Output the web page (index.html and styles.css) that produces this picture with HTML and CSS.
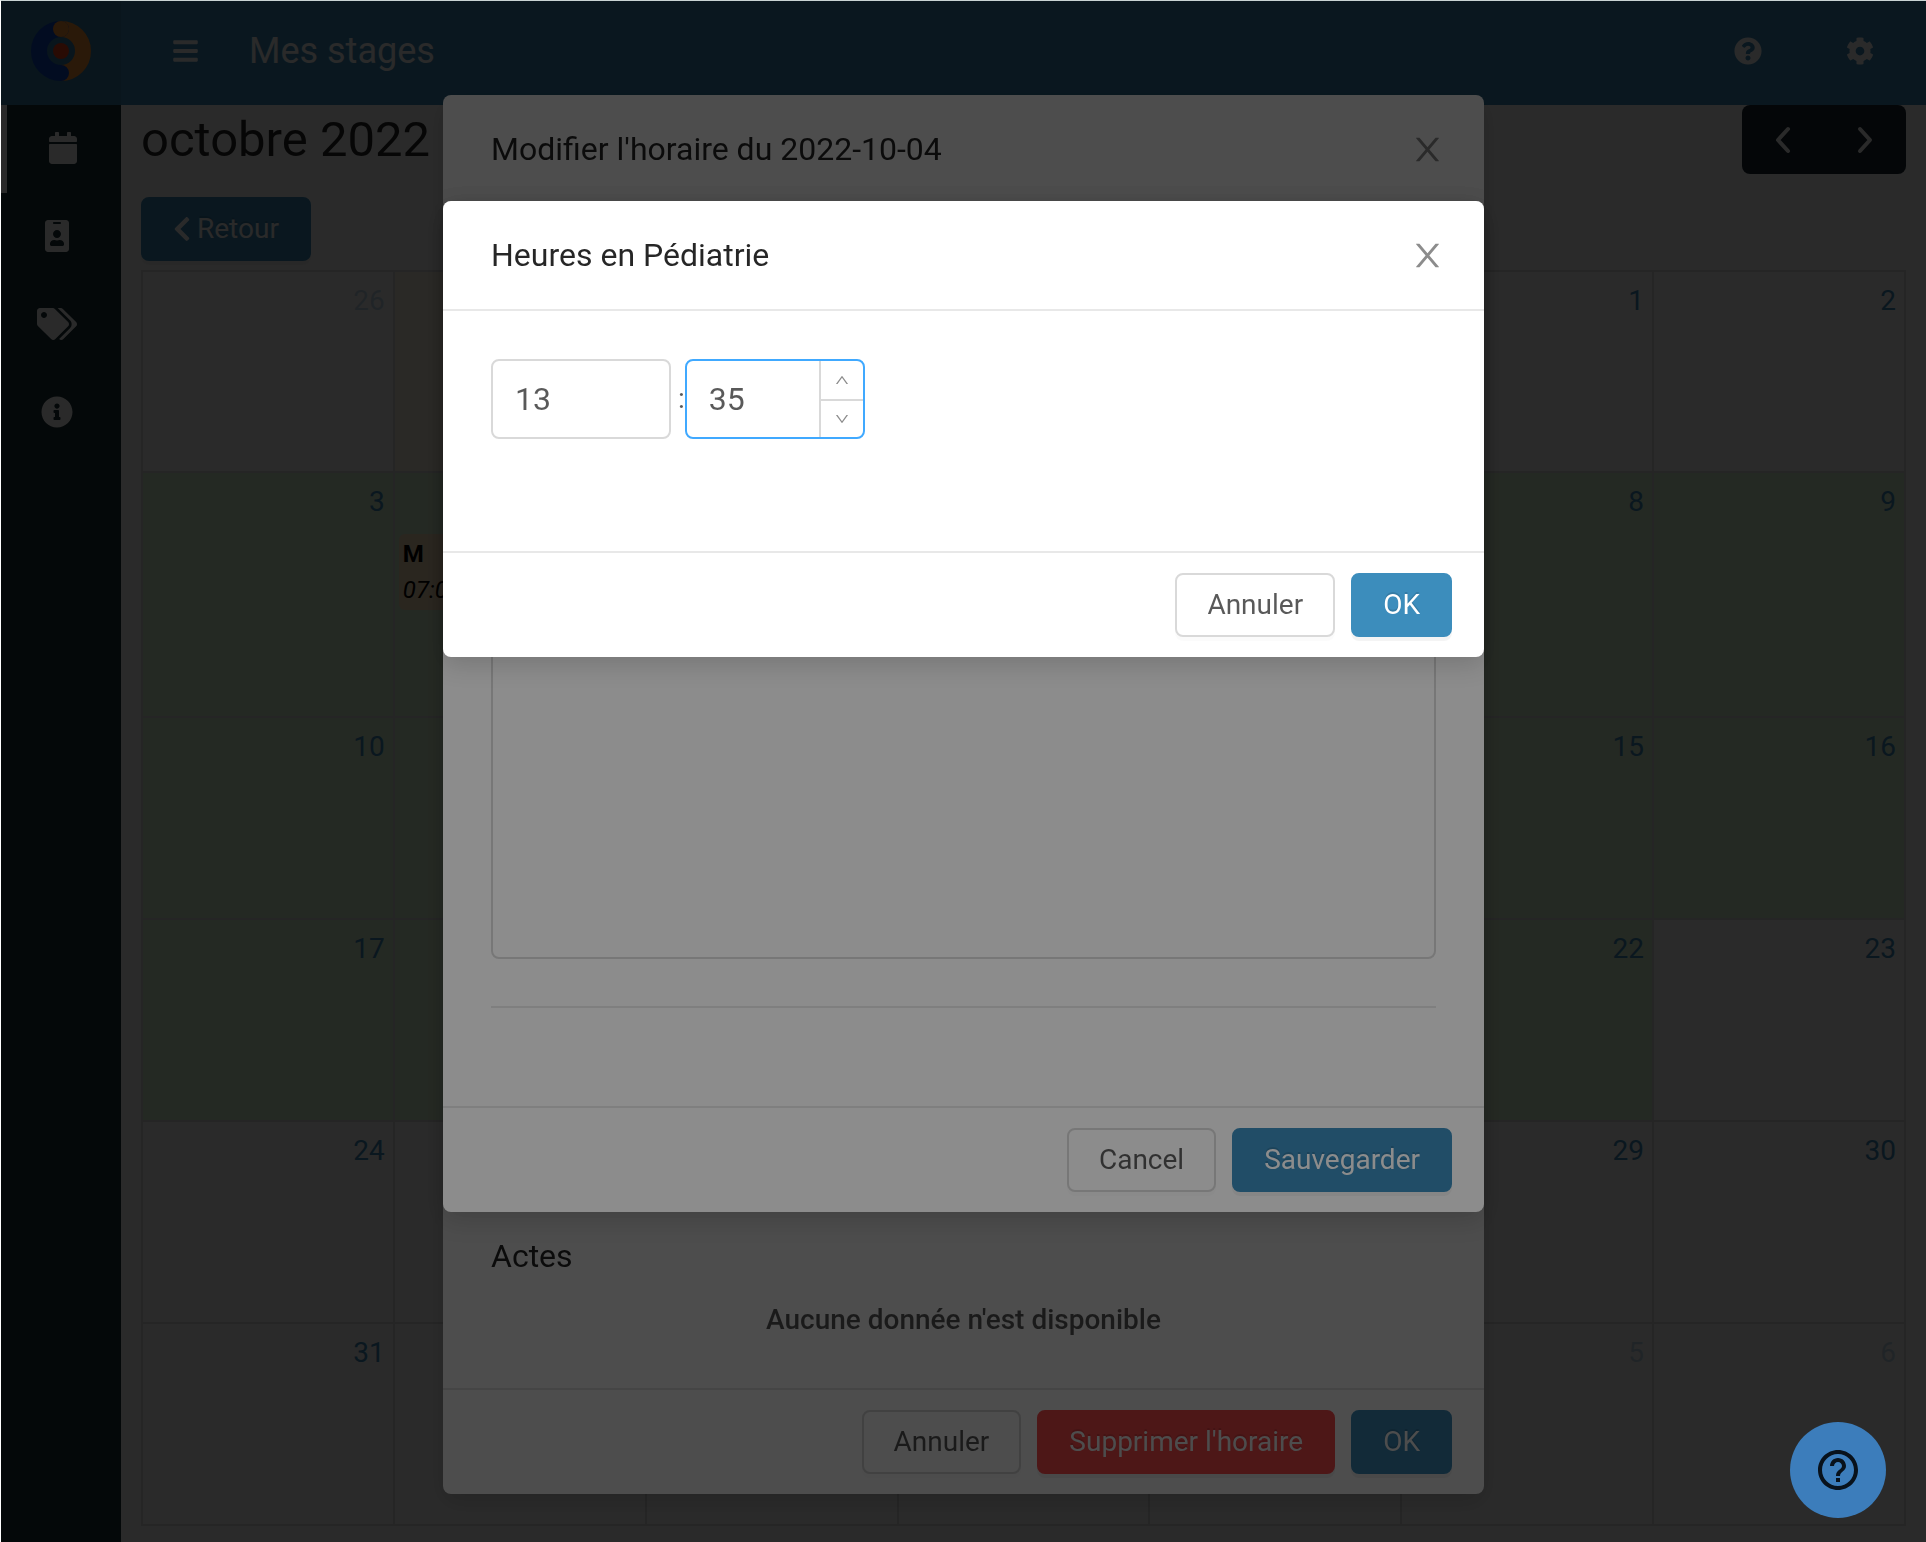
FILE: index.html
```html
<!DOCTYPE html>
<html lang="fr">
<head>
    <meta charset="utf-8">
    <title>Mes stages</title>
    <link rel="stylesheet" href="styles.css">
</head>
<body>

<div class="app">
    <header class="header">
        <a class="logo" href="#" aria-label="Accueil">
            <svg width="60" height="60" viewBox="0 0 60 60" fill="none" stroke-width="16">
                <path stroke="#ff9636" d="M30 8A22 22 0 0 1 30 52"/>
                <path stroke="#0c48c8" stroke-linecap="round" d="M30 52A22 22 0 0 1 30 8"/>
                <circle cx="30" cy="8" r="8" fill="#ff9636"/>
                <circle cx="30" cy="30" r="8" fill="#f7441c"/>
            </svg>
        </a>
        <button class="icon-btn menu-btn" aria-label="Menu">
            <svg width="25" height="28" viewBox="0 0 448 512"><path d="M16 132h416c8.837 0 16-7.163 16-16V76c0-8.837-7.163-16-16-16H16C7.163 60 0 67.163 0 76v40c0 8.837 7.163 16 16 16zm0 160h416c8.837 0 16-7.163 16-16v-40c0-8.837-7.163-16-16-16H16c-8.837 0-16 7.163-16 16v40c0 8.837 7.163 16 16 16zm0 160h416c8.837 0 16-7.163 16-16v-40c0-8.837-7.163-16-16-16H16c-8.837 0-16 7.163-16 16v40c0 8.837 7.163 16 16 16z"/></svg>
        </button>
        <h1 class="header-title">Mes stages</h1>
        <div class="header-tools">
            <button class="icon-btn" aria-label="Aide">
                <svg width="28" height="28" viewBox="0 0 512 512"><path d="M504 256c0 136.997-111.043 248-248 248S8 392.997 8 256C8 119.083 119.043 8 256 8s248 111.083 248 248zM262.655 90c-54.497 0-89.255 22.957-116.549 63.758-3.536 5.286-2.353 12.415 2.715 16.258l34.699 26.31c5.205 3.947 12.621 3.008 16.665-2.122 17.864-22.658 30.113-35.797 57.303-35.797 20.429 0 45.698 13.148 45.698 32.958 0 14.976-12.363 22.667-32.534 33.976C247.128 238.528 216 254.941 216 296v4c0 6.627 5.373 12 12 12h56c6.627 0 12-5.373 12-12v-1.333c0-28.462 83.186-29.647 83.186-106.667 0-58.002-60.165-102-116.531-102zM256 338c-25.365 0-46 20.635-46 46 0 25.364 20.635 46 46 46s46-20.636 46-46c0-25.365-20.635-46-46-46z"/></svg>
            </button>
            <button class="icon-btn" aria-label="Paramètres">
                <svg width="28" height="28" viewBox="0 0 512 512"><path d="M487.4 315.7l-42.6-24.6c4.3-23.2 4.3-47 0-70.2l42.6-24.6c4.9-2.8 7.1-8.6 5.5-14-11.1-35.6-30-67.8-54.7-94.6-3.8-4.1-10-5.1-14.8-2.3L380.8 110c-17.9-15.4-38.5-27.3-60.8-35.1V25.8c0-5.6-3.9-10.5-9.4-11.7-36.7-8.2-74.3-7.8-109.2 0-5.5 1.2-9.4 6.1-9.4 11.7V75c-22.2 7.9-42.8 19.8-60.8 35.1L88.7 85.5c-4.9-2.8-11-1.9-14.8 2.3-24.7 26.7-43.6 58.9-54.7 94.6-1.7 5.4.6 11.2 5.5 14L67.3 221c-4.3 23.2-4.3 47 0 70.2l-42.6 24.6c-4.9 2.8-7.1 8.6-5.5 14 11.1 35.6 30 67.8 54.7 94.6 3.8 4.1 10 5.1 14.8 2.3l42.6-24.6c17.9 15.4 38.5 27.3 60.8 35.1v49.2c0 5.6 3.9 10.5 9.4 11.7 36.7 8.2 74.3 7.8 109.2 0 5.5-1.2 9.4-6.1 9.4-11.7v-49.2c22.2-7.9 42.8-19.8 60.8-35.1l42.6 24.6c4.9 2.8 11 1.9 14.8-2.3 24.7-26.7 43.6-58.9 54.7-94.6 1.5-5.5-.7-11.3-5.6-14.1zM256 336c-44.1 0-80-35.9-80-80s35.9-80 80-80 80 35.9 80 80-35.9 80-80 80z"/></svg>
            </button>
        </div>
    </header>

    <div class="main">
        <nav class="sidebar">
            <a class="sidebar-item active" href="#" aria-label="Calendrier">
                <svg width="28" height="32" viewBox="0 0 448 512"><path d="M12 192h424c6.6 0 12 5.4 12 12v260c0 26.5-21.5 48-48 48H48c-26.5 0-48-21.5-48-48V204c0-6.6 5.4-12 12-12zm436-44v-36c0-26.5-21.5-48-48-48h-48V12c0-6.6-5.4-12-12-12h-40c-6.6 0-12 5.4-12 12v52H160V12c0-6.6-5.4-12-12-12h-40c-6.6 0-12 5.4-12 12v52H48C21.5 64 0 85.5 0 112v36c0 6.6 5.4 12 12 12h424c6.6 0 12-5.4 12-12z"/></svg>
            </a>
            <a class="sidebar-item" href="#" aria-label="Profil">
                <svg width="24" height="32" viewBox="0 0 384 512"><path d="M336 0H48C21.5 0 0 21.5 0 48v416c0 26.5 21.5 48 48 48h288c26.5 0 48-21.5 48-48V48c0-26.5-21.5-48-48-48zM144 32h96c8.8 0 16 7.2 16 16s-7.2 16-16 16h-96c-8.8 0-16-7.2-16-16s7.2-16 16-16zm48 128c35.3 0 64 28.7 64 64s-28.7 64-64 64-64-28.7-64-64 28.7-64 64-64zm112 236.8c0 10.6-10 19.2-22.4 19.2H102.4C90 416 80 407.4 80 396.8v-19.2c0-31.8 30.1-57.6 67.2-57.6h5c12.3 5.1 25.7 8 39.8 8s27.6-2.9 39.8-8h5c37.1 0 67.2 25.8 67.2 57.6v19.2z"/></svg>
            </a>
            <a class="sidebar-item" href="#" aria-label="Étiquettes">
                <svg width="40" height="32" viewBox="0 0 640 512"><path d="M497.941 225.941L286.059 14.059A48 48 0 0 0 252.118 0H48C21.49 0 0 21.49 0 48v204.118a48 48 0 0 0 14.059 33.941l211.882 211.882c18.744 18.745 49.136 18.746 67.882 0l204.118-204.118c18.745-18.745 18.745-49.137 0-67.882zM112 160c-26.51 0-48-21.49-48-48s21.49-48 48-48 48 21.49 48 48-21.49 48-48 48zm513.941 133.823L421.823 497.941c-18.745 18.745-49.137 18.745-67.882 0l-.36-.36L527.64 323.522c16.999-16.999 26.362-39.6 26.362-63.64s-9.362-46.641-26.362-63.64L331.397 0h48.721a48 48 0 0 1 33.941 14.059l211.882 211.882c18.745 18.745 18.745 49.137 0 67.882z"/></svg>
            </a>
            <a class="sidebar-item" href="#" aria-label="Informations">
                <svg width="32" height="32" viewBox="0 0 512 512"><path d="M256 8C119.043 8 8 119.083 8 256c0 136.997 111.043 248 248 248s248-111.003 248-248C504 119.083 392.957 8 256 8zm0 110c23.196 0 42 18.804 42 42s-18.804 42-42 42-42-18.804-42-42 18.804-42 42-42zm56 254c0 6.627-5.373 12-12 12h-88c-6.627 0-12-5.373-12-12v-24c0-6.627 5.373-12 12-12h12v-64h-12c-6.627 0-12-5.373-12-12v-24c0-6.627 5.373-12 12-12h64c6.627 0 12 5.373 12 12v100h12c6.627 0 12 5.373 12 12v24z"/></svg>
            </a>
        </nav>

        <main class="content">
            <div class="toolbar">
                <h2>octobre 2022</h2>
                <div class="nav-group">
                    <button aria-label="Mois précédent"><svg width="16" height="28" viewBox="0 0 16 28"><path d="M13 3L3 14l10 11"/></svg></button>
                    <button aria-label="Mois suivant"><svg width="16" height="28" viewBox="0 0 16 28"><path d="M3 3l10 11L3 25"/></svg></button>
                </div>
            </div>
            <button class="btn btn-primary btn-back">
                <svg width="18" height="28" viewBox="0 0 320 512"><path d="M34.52 239.03L228.87 44.69c9.37-9.37 24.57-9.37 33.94 0l22.67 22.67c9.36 9.36 9.37 24.52.04 33.9L131.49 256l154.02 154.75c9.34 9.38 9.32 24.54-.04 33.9l-22.67 22.67c-9.37 9.37-24.57 9.37-33.94 0L34.52 272.97c-9.37-9.37-9.37-24.57 0-33.94z"/></svg>
                Retour
            </button>

            <table class="calendar">
                <tr class="first">
                    <td class="other"><a href="#">26</a></td>
                    <td class="other today"><a href="#">27</a></td>
                    <td class="other"><a href="#">28</a></td>
                    <td class="other"><a href="#">29</a></td>
                    <td class="other"><a href="#">30</a></td>
                    <td><a href="#">1</a></td>
                    <td><a href="#">2</a></td>
                </tr>
                <tr class="busy">
                    <td class="stage"><a href="#">3</a></td>
                    <td class="stage">
                        <a href="#">4</a>
                        <div class="event"><b>M</b><i>07:00</i></div>
                    </td>
                    <td class="stage"><a href="#">5</a></td>
                    <td class="stage"><a href="#">6</a></td>
                    <td class="stage"><a href="#">7</a></td>
                    <td class="stage"><a href="#">8</a></td>
                    <td class="stage"><a href="#">9</a></td>
                </tr>
                <tr>
                    <td class="stage"><a href="#">10</a></td>
                    <td class="stage"><a href="#">11</a></td>
                    <td class="stage"><a href="#">12</a></td>
                    <td class="stage"><a href="#">13</a></td>
                    <td class="stage"><a href="#">14</a></td>
                    <td class="stage"><a href="#">15</a></td>
                    <td class="stage"><a href="#">16</a></td>
                </tr>
                <tr>
                    <td class="stage"><a href="#">17</a></td>
                    <td class="stage"><a href="#">18</a></td>
                    <td class="stage"><a href="#">19</a></td>
                    <td class="stage"><a href="#">20</a></td>
                    <td class="stage"><a href="#">21</a></td>
                    <td class="stage"><a href="#">22</a></td>
                    <td><a href="#">23</a></td>
                </tr>
                <tr>
                    <td><a href="#">24</a></td>
                    <td><a href="#">25</a></td>
                    <td><a href="#">26</a></td>
                    <td><a href="#">27</a></td>
                    <td><a href="#">28</a></td>
                    <td><a href="#">29</a></td>
                    <td><a href="#">30</a></td>
                </tr>
                <tr>
                    <td><a href="#">31</a></td>
                    <td class="other"><a href="#">1</a></td>
                    <td class="other"><a href="#">2</a></td>
                    <td class="other"><a href="#">3</a></td>
                    <td class="other"><a href="#">4</a></td>
                    <td class="other"><a href="#">5</a></td>
                    <td class="other"><a href="#">6</a></td>
                </tr>
            </table>
        </main>
    </div>
</div>

<!-- schedule of the day -->
<div class="modal-wrap modal-day">
    <div class="modal" role="dialog" aria-labelledby="day-title">
        <div class="modal-header">
            <h3 id="day-title">Modifier l'horaire du 2022-10-04</h3>
            <button class="modal-close" aria-label="Fermer">
                <svg width="37" height="37" viewBox="0 0 1024 1024"><path d="M563.8 512l262.5-312.9c4.4-5.2.7-13.1-6.1-13.1h-79.8c-4.7 0-9.2 2.1-12.3 5.7L511.6 449.8 295.1 191.7c-3-3.6-7.5-5.7-12.3-5.7H203c-6.8 0-10.5 7.9-6.1 13.1L459.4 512 196.9 824.9A7.95 7.95 0 0 0 203 838h79.8c4.7 0 9.2-2.1 12.3-5.7l216.5-258.1 216.5 258.1c3 3.6 7.5 5.7 12.3 5.7h79.8c6.8 0 10.5-7.9 6.1-13.1L563.8 512z"/></svg>
            </button>
        </div>
        <div class="modal-body">
            <h4>Actes</h4>
            <p class="empty">Aucune donnée n'est disponible</p>
        </div>
        <div class="modal-footer">
            <button class="btn">Annuler</button>
            <button class="btn btn-danger">Supprimer l'horaire</button>
            <button class="btn btn-primary">OK</button>
        </div>
    </div>
</div>

<!-- notes -->
<div class="modal-wrap modal-notes">
    <div class="modal" role="dialog" aria-label="Notes">
        <div class="modal-body">
            <textarea aria-label="Notes"></textarea>
            <hr>
        </div>
        <div class="modal-footer">
            <button class="btn">Cancel</button>
            <button class="btn btn-primary">Sauvegarder</button>
        </div>
    </div>
</div>

<!-- hours -->
<div class="modal-wrap modal-hours">
    <div class="modal" role="dialog" aria-labelledby="hours-title">
        <div class="modal-header">
            <h3 id="hours-title">Heures en Pédiatrie</h3>
            <button class="modal-close" aria-label="Fermer">
                <svg width="37" height="37" viewBox="0 0 1024 1024"><path d="M563.8 512l262.5-312.9c4.4-5.2.7-13.1-6.1-13.1h-79.8c-4.7 0-9.2 2.1-12.3 5.7L511.6 449.8 295.1 191.7c-3-3.6-7.5-5.7-12.3-5.7H203c-6.8 0-10.5 7.9-6.1 13.1L459.4 512 196.9 824.9A7.95 7.95 0 0 0 203 838h79.8c4.7 0 9.2-2.1 12.3-5.7l216.5-258.1 216.5 258.1c3 3.6 7.5 5.7 12.3 5.7h79.8c6.8 0 10.5-7.9 6.1-13.1L563.8 512z"/></svg>
            </button>
        </div>
        <div class="modal-body">
            <div class="time">
                <div class="number">
                    <input type="number" aria-label="Heures" value="13">
                </div>
                <span class="colon">:</span>
                <div class="number focused">
                    <input type="number" aria-label="Minutes" value="35">
                    <div class="handlers">
                        <button aria-label="Augmenter"><svg width="16" height="16" viewBox="0 0 1024 1024"><path d="M890.5 755.3L537.9 269.2c-12.8-17.6-39-17.6-51.7 0L133.5 755.3A8 8 0 0 0 140 768h75c5.1 0 9.9-2.5 12.9-6.6L512 369.8l284.1 391.6c3 4.1 7.8 6.6 12.9 6.6h75c6.5 0 10.3-7.4 6.5-12.7z"/></svg></button>
                        <button aria-label="Diminuer"><svg width="16" height="16" viewBox="0 0 1024 1024"><path d="M884 256h-75c-5.1 0-9.9 2.5-12.9 6.6L512 654.2 227.9 262.6c-3-4.1-7.8-6.6-12.9-6.6h-75c-6.5 0-10.3 7.4-6.5 12.7l352.6 486.1c12.8 17.6 39 17.6 51.7 0l352.6-486.1c3.9-5.3.1-12.7-6.4-12.7z"/></svg></button>
                    </div>
                </div>
            </div>
        </div>
        <div class="modal-footer">
            <button class="btn">Annuler</button>
            <button class="btn btn-primary">OK</button>
        </div>
    </div>
</div>

<button class="help" aria-label="Aide en ligne">
    <svg width="48" height="48" viewBox="0 0 24 24"><path d="M11 18h2v-2h-2v2zm1-16C6.48 2 2 6.48 2 12s4.48 10 10 10 10-4.48 10-10S17.52 2 12 2zm0 18c-4.41 0-8-3.59-8-8s3.59-8 8-8 8 3.59 8 8-3.59 8-8 8zm0-14c-2.21 0-4 1.79-4 4h2c0-1.1.9-2 2-2s2 .9 2 2c0 2-3 1.75-3 5h2c0-2.25 3-2.5 3-5 0-2.21-1.79-4-4-4z"/></svg>
</button>

</body>
</html>
```

FILE: styles.css
```css
* {
    box-sizing: border-box;
}

body {
    margin: 0;
    min-height: 100vh;
    display: flex;
    border-top: 1px solid #c9d3d3;
    border-left: 1px solid #fff;
    font: 28px/44px Roboto, sans-serif;
    color: rgba(0, 0, 0, .65);
    background: #fff;
}

h1, h2, h3, h4, p {
    margin: 0;
    font-weight: 400;
}

h2, h3, h4 {
    color: rgba(0, 0, 0, .85);
}

button {
    font: inherit;
    color: inherit;
    padding: 0;
    border: 0;
    background: none;
    cursor: pointer;
}

svg {
    display: block;
    fill: currentColor;
}

.app {
    flex: 1;
    display: flex;
    flex-direction: column;
}

/* header */
.header {
    height: 104px;
    padding-bottom: 4px;
    display: flex;
    align-items: center;
    background: #3c8dbc;
    color: #fff;
}
.logo {
    width: 120px;
    height: 104px;
    margin-bottom: -4px;
    padding-bottom: 4px;
    display: flex;
    align-items: center;
    justify-content: center;
    background: #367fa9;
}
.logo svg {
    fill: none;
}
.menu-btn {
    margin: 0 51px 0 52px;
}
.header-title {
    font-size: 36px;
}
.header-tools {
    display: flex;
    gap: 84px;
    margin-left: auto;
    padding-right: 52px;
}

.main {
    flex: 1;
    display: flex;
}

/* sidebar */
.sidebar {
    width: 120px;
    background: #1b3036;
}
.sidebar-item {
    height: 88px;
    padding: 0 8px 2px 0;
    display: flex;
    align-items: center;
    justify-content: center;
    color: #fff;
}
.sidebar-item.active {
    padding-right: 2px;
    border-left: 6px solid #fff;
}

/* calendar */
.content {
    flex: 1;
    padding: 0 20px;
}
.toolbar {
    display: flex;
    justify-content: space-between;
    align-items: flex-start;
    margin-bottom: 23px;
}
.toolbar h2 {
    font-size: 49px;
    line-height: 69px;
}
.nav-group {
    display: flex;
    border-radius: 8px;
    background: #1a2733;
    color: #fff;
}
.nav-group button {
    width: 82px;
    height: 69px;
    display: flex;
    align-items: center;
    justify-content: center;
}
.nav-group svg {
    fill: none;
    stroke: currentColor;
    stroke-width: 4;
    stroke-linecap: round;
    stroke-linejoin: round;
}

.calendar {
    width: 100%;
    margin-top: 9px;
    table-layout: fixed;
    border-collapse: collapse;
}
.calendar tr {
    height: 202px;
}
.calendar tr.first {
    height: 201px;
}
.calendar tr.busy {
    height: 245px;
}
.calendar td {
    padding: 7px 8px 0 4px;
    border: 2px solid #ddd;
    vertical-align: top;
}
.calendar td a {
    display: block;
    text-align: right;
    text-decoration: none;
    color: #3c8dbc;
}
.calendar .other a {
    opacity: .3;
}
.calendar .today {
    background: #fcf8e3;
}
.calendar .stage {
    background: #dcf5d4;
}
.event {
    margin-top: 10px;
    padding: 2px 4px;
    border-radius: 6px;
    background: #ffe3bd;
    color: #000;
    font-size: 24px;
    line-height: 36px;
}
.event b,
.event i {
    display: block;
}

/* buttons */
.btn {
    height: 64px;
    padding: 0 30px;
    border: 2px solid #d9d9d9;
    border-radius: 8px;
    background: #fff;
    box-shadow: 0 4px 0 rgba(0, 0, 0, .015);
}
.btn-primary,
.btn-danger {
    color: #fff;
    text-shadow: 0 -2px 0 rgba(0, 0, 0, .12);
    box-shadow: 0 4px 0 rgba(0, 0, 0, .045);
}
.btn-primary {
    border-color: #3c8dbc;
    background: #3c8dbc;
}
.btn-danger {
    border-color: #ff4d4f;
    background: #ff4d4f;
}
.btn-back {
    display: flex;
    align-items: center;
    gap: 6px;
}

/* modals */
.modal-wrap {
    position: fixed;
    inset: 1px 0 0 1px;
    overflow: hidden;
    background: rgba(0, 0, 0, .45);
}
.modal {
    max-width: 1041px;
    margin: 200px auto 0;
    border-radius: 8px;
    background: #fff;
    box-shadow: 0 8px 24px rgba(0, 0, 0, .15);
}
.modal-day .modal {
    margin-top: 94px;
}
.modal-header {
    display: flex;
    align-items: center;
    justify-content: space-between;
    padding-left: 48px;
    border-bottom: 2px solid #e8e8e8;
}
.modal h3,
.modal h4 {
    font-size: 32px;
}
.modal-close {
    width: 113px;
    height: 108px;
    display: flex;
    align-items: center;
    justify-content: center;
    color: rgba(0, 0, 0, .45);
}
.modal-body {
    padding: 48px;
}
.modal-footer {
    display: flex;
    justify-content: flex-end;
    gap: 16px;
    padding: 20px 32px;
    border-top: 2px solid #e8e8e8;
}

.modal-day .modal-body {
    min-height: 1183px;
    padding-bottom: 46px;
    display: flex;
    flex-direction: column;
    justify-content: flex-end;
    gap: 20px;
}
.empty {
    text-align: center;
    font-weight: 500;
}

textarea {
    display: block;
    width: 100%;
    height: 710px;
    border: 2px solid #d9d9d9;
    border-radius: 8px;
    background: #fff;
    font: inherit;
    resize: none;
}
hr {
    margin: 47px 0 0;
    border: 0;
    border-top: 2px solid #e8e8e8;
}
.modal-notes .modal-body {
    padding-bottom: 98px;
}

.modal-hours .modal-body {
    min-height: 240px;
}
.time {
    display: flex;
    align-items: center;
}
.colon {
    padding-left: 7px;
}
.number {
    width: 180px;
    height: 80px;
    display: flex;
    border: 2px solid #d9d9d9;
    border-radius: 8px;
    overflow: hidden;
}
.number.focused {
    border-color: #40a9ff;
}
.number input {
    flex: 1;
    min-width: 0;
    padding: 0 22px;
    border: 0;
    outline: 0;
    background: none;
    font: inherit;
    font-size: 32px;
    color: inherit;
    appearance: textfield;
}
.number input::-webkit-inner-spin-button {
    appearance: none;
}
.handlers {
    width: 44px;
    display: grid;
    grid-template-rows: 38px 38px;
    border-left: 2px solid #d9d9d9;
    color: rgba(0, 0, 0, .45);
}
.handlers button {
    display: flex;
    align-items: center;
    justify-content: center;
}
.handlers button + button {
    border-top: 2px solid #d9d9d9;
}

/* floating help */
.help {
    position: fixed;
    right: 40px;
    bottom: 24px;
    width: 96px;
    height: 96px;
    display: flex;
    align-items: center;
    justify-content: center;
    border-radius: 50%;
    background: #3c7dbb;
    color: #08121c;
}
```
